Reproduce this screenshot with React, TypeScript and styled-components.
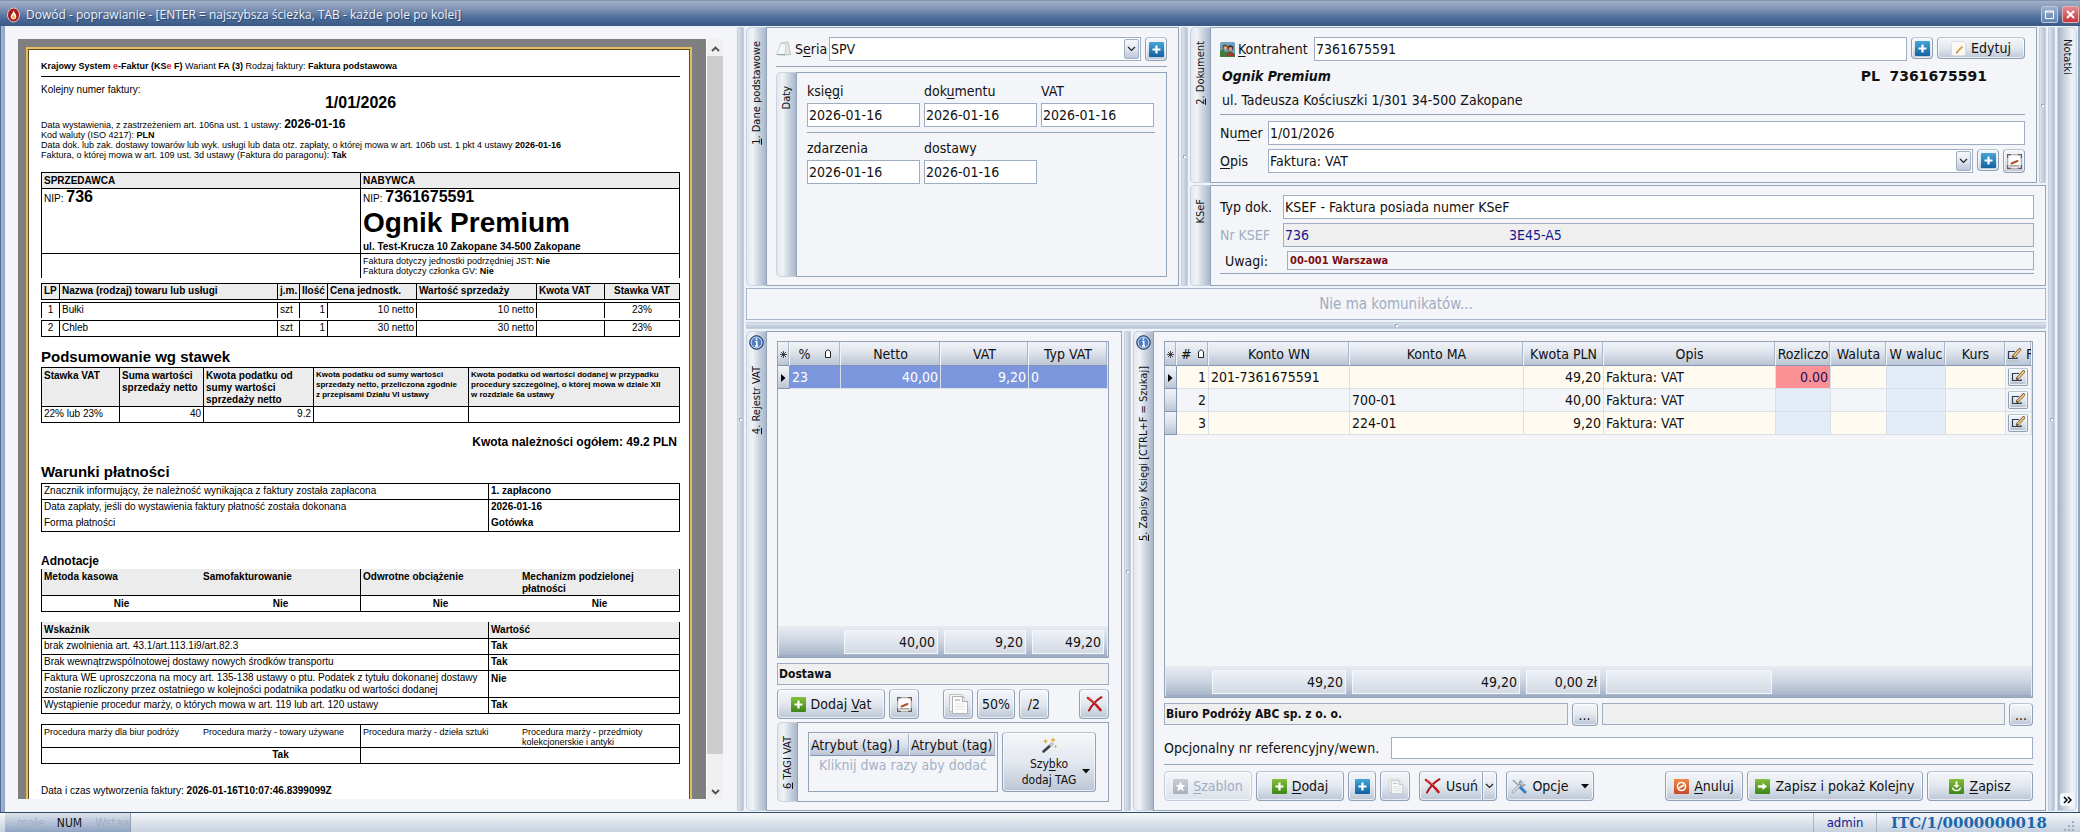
import React from "react";
import styled, { createGlobalStyle, css } from "styled-components";

const ui = `"DejaVu Sans Condensed", "DejaVu Sans", Tahoma, sans-serif`;
const doc = `"Liberation Sans", Arial, sans-serif`;
const line = "#93a3b8";
const panelBg = "#f3f5f8";
const raised = "linear-gradient(#f1f3f7, #dfe4ec 45%, #b9c4d4)";
const soft = "linear-gradient(#f4f6f9, #e3e8ef 50%, #bcc6d6)";

const Global = createGlobalStyle`
  *, *::before, *::after { box-sizing: border-box; }
  body { margin: 0; background: #eef2f9; font: 14px/18px ${ui}; color: #111; }
  button, input, select { font: inherit; color: inherit; margin: 0; }
  u { text-underline-offset: 2px; }
`;

/* ---------- window frame ---------- */

const Window = styled.div`
  display: flex;
  flex-direction: column;
  height: 100vh;
  min-height: 640px;
`;

const TitleBar = styled.header`
  flex: none;
  display: flex;
  align-items: center;
  gap: 6px;
  height: 26px;
  padding: 2px 1px 0 7px;
  border-top: 1px solid #8393ad;
  background: linear-gradient(#a3b1c8, #7c90b1 35%, #4a6a98 70%, #3a5985);
  color: #eef3fa;
`;

const Title = styled.h1`
  flex: 1;
  margin: 0;
  font: 12px/20px "Open Sans", "Noto Sans", sans-serif;
  text-shadow: 1px 1px 1px #2b4468;
`;

const CaptionButton = styled.button<{ $close?: boolean }>`
  display: grid;
  place-items: center;
  width: 17px;
  height: 17px;
  margin-left: -2px;
  padding: 0;
  border: 1px solid ${(p) => (p.$close ? "#e9b0b4" : "#b9c8de")};
  border-radius: 2px;
  background: ${(p) => (p.$close ? "linear-gradient(#e38b8f, #c5373f)" : "linear-gradient(#9db1cf, #6382ae)")};
`;

const Workspace = styled.main`
  flex: 1;
  min-height: 0;
  display: grid;
  grid-template-columns: 730fr 7px 1300fr 7px 20px;
  grid-template-rows: minmax(0, 1fr);
  column-gap: 2px;
  padding: 1px 3px 1px 5px;
  background: linear-gradient(90deg, #4d6a94 0, #4d6a94 1px, #a8b8cf 1px, #8fa3c0 5px, #eef2f9 5px, #eef2f9 calc(100% - 2px), #93a6c2 calc(100% - 2px));
`;

const Splitter = styled.div<{ $horizontal?: boolean }>`
  flex: none;
  display: grid;
  place-items: center;
  ${(p) =>
    p.$horizontal
      ? "height: 7px; background: linear-gradient(#dde3ec, #b7c2d3);"
      : "width: 7px; background: linear-gradient(90deg, #dde3ec, #b7c2d3);"}
  border: 1px solid #c5cfdd;
  border-radius: 1px;
  &::after {
    content: "";
    width: 3px;
    height: 3px;
    background: #f7f9fc;
    border: solid #9aa9bf;
    border-width: 1px 0 0 1px;
  }
`;

/* ---------- tabbed panels ---------- */

const PanelBox = styled.section<{ $grow?: boolean }>`
  display: flex;
  min-width: 0;
  min-height: 0;
  ${(p) => p.$grow && "flex: 1;"}
`;

const Tab = styled.h2<{ $info?: boolean }>`
  flex: none;
  display: flex;
  flex-direction: column;
  align-items: center;
  gap: 16px;
  width: 20px;
  margin: 0;
  padding-top: ${(p) => (p.$info ? 3 : 13)}px;
  border: 1px solid #c9d2df;
  border-right: 0;
  border-radius: 5px 0 0 5px;
  background: linear-gradient(90deg, #e3e8f0, #f0f3f7 30%, #c9d2df 65%, #a9b6ca);
  font: 11px/16px ${ui};
  span {
    writing-mode: vertical-rl;
    transform: rotate(180deg);
    white-space: nowrap;
  }
  u { text-underline-offset: -2px; }
`;

const PanelBody = styled.div<{ $pad: string }>`
  flex: 1;
  min-width: 0;
  min-height: 0;
  display: flex;
  flex-direction: column;
  padding: ${(p) => p.$pad};
  border: 1px solid ${line};
  background: ${panelBg};
`;

function Panel(props: {
  tab: React.ReactNode;
  info?: boolean;
  grow?: boolean;
  pad?: string;
  children: React.ReactNode;
}) {
  return (
    <PanelBox $grow={props.grow}>
      <Tab $info={props.info}>
        {props.info && <InfoIcon />}
        <span>{props.tab}</span>
      </Tab>
      <PanelBody $pad={props.pad ?? "9px 11px 8px 9px"}>{props.children}</PanelBody>
    </PanelBox>
  );
}

const NotesTab = styled.aside`
  display: flex;
  flex-direction: column;
  align-items: center;
  justify-content: space-between;
  padding: 11px 0 4px;
  border: 1px solid #c9d2df;
  border-radius: 0 5px 5px 0;
  background: linear-gradient(90deg, #a5b3c8, #c9d2df 35%, #f0f3f7 80%, #e3e8f0);
  font: 11px/16px ${ui};
  span { writing-mode: vertical-rl; }
`;

const MoreButton = styled.button`
  width: 14px;
  height: 13px;
  padding: 0;
  border: 0;
  border-radius: 3px;
  background: #f4f6fa;
  display: grid;
  place-items: center;
`;

const RightSide = styled.div`
  display: flex;
  flex-direction: column;
  gap: 2px;
  min-width: 0;
`;

const TopRow = styled.div`
  flex: none;
  display: grid;
  grid-template-columns: 433px 7px minmax(0, 1fr);
  column-gap: 2px;
  height: 259px;
`;

const BottomRow = styled.div`
  flex: 1;
  min-height: 0;
  display: grid;
  grid-template-columns: 376px 7px minmax(0, 1fr);
  grid-template-rows: minmax(0, 1fr);
  column-gap: 2px;
`;

const Stack = styled.div`
  display: flex;
  flex-direction: column;
  gap: 2px;
  min-width: 0;
`;

const DocumentRow = styled.div`
  flex: none;
  display: flex;
  gap: 2px;
  height: 156px;
`;

/* ---------- form parts ---------- */

const Row = styled.div<{ $top?: number; $gap?: number }>`
  flex: none;
  display: flex;
  align-items: flex-start;
  gap: ${(p) => p.$gap ?? 4}px;
  margin-top: ${(p) => p.$top ?? 0}px;
`;

const Rule = styled.hr<{ $gap: number }>`
  flex: none;
  width: 100%;
  height: 1px;
  margin: ${(p) => p.$gap}px 0 0;
  border: 0;
  background: ${line};
`;

const Label = styled.label<{ $w: number; $muted?: boolean; $indent?: number }>`
  flex: none;
  display: flex;
  align-items: center;
  gap: 3px;
  width: ${(p) => p.$w}px;
  height: 24px;
  margin-right: -4px;
  padding-left: ${(p) => p.$indent ?? 0}px;
  color: ${(p) => (p.$muted ? "#9fadc3" : "#111")};
  white-space: nowrap;
`;

const fieldBox = css`
  min-width: 0;
  border: 1px solid #9fadc2;
  border-radius: 0;
  background: #fff;
  outline: 0;
`;

const Input = styled.input`
  ${fieldBox}
  flex: 1;
  width: 100%;
  height: 24px;
  padding: 0 1px 1px;
`;

const BoldInput = styled.input`
  ${fieldBox}
  flex: 1;
  width: 100%;
  height: 22px;
  padding: 0 1px 1px;
  background: #efefef;
  font-size: 12px;
  font-weight: bold;
`;

const RemarkInput = styled(BoldInput)`
  height: 19px;
  padding-left: 2px;
  background: ${panelBg};
  color: #7d0d12;
  font-size: 11px;
`;

const Output = styled.output`
  ${fieldBox}
  flex: 1;
  display: grid;
  grid-template-columns: 224px 1fr;
  align-items: center;
  height: 24px;
  padding: 0 1px;
  background: #efefef;
  color: #17178c;
`;

const SelectWrap = styled.span`
  position: relative;
  flex: 1;
  display: flex;
`;

const Select = styled.select`
  ${fieldBox}
  appearance: none;
  flex: 1;
  height: 24px;
  padding: 0 20px 1px 1px;
`;

const Drop = styled.span`
  position: absolute;
  right: 2px;
  top: 2px;
  display: grid;
  place-items: center;
  width: 15px;
  height: 20px;
  border: 1px solid #a3b0c4;
  border-radius: 2px;
  background: ${soft};
  pointer-events: none;
`;

function ComboBox({ id, value }: { id: string; value: string }) {
  return (
    <SelectWrap>
      <Select id={id} defaultValue={value}>
        <option>{value}</option>
      </Select>
      <Drop>
        <Chevron />
      </Drop>
    </SelectWrap>
  );
}

const Button = styled.button<{ $w: number; $h?: number }>`
  flex: none;
  display: flex;
  align-items: center;
  justify-content: center;
  gap: 5px;
  width: ${(p) => p.$w}px;
  height: ${(p) => p.$h ?? 30}px;
  padding: 0;
  border: 1px solid #8fa0b9;
  border-top-color: #b9c4d3;
  border-radius: 4px;
  background: ${soft};
  box-shadow: inset 0 0 0 1px rgba(255, 255, 255, 0.65);
  white-space: nowrap;
  &:disabled {
    color: #9fadc3;
    border-color: #c3ccda;
    background: linear-gradient(#f5f7fa, #dde3ec);
  }
`;

const TagButton = styled(Button)`
  position: relative;
  flex-direction: column;
  gap: 2px;
  font-size: 12px;
  line-height: 16px;
`;

const TagArrow = styled.span`
  position: absolute;
  right: 5px;
  top: 36px;
  display: flex;
`;

const SplitPart = styled(Button)<{ $side: "left" | "right" }>`
  border-radius: ${(p) => (p.$side === "left" ? "4px 0 0 4px" : "0 4px 4px 0")};
  ${(p) => p.$side === "right" && "border-left: 0;"}
`;

const Spacer = styled.span<{ $w?: number }>`
  ${(p) => (p.$w ? `flex: none; width: ${p.$w}px;` : "flex: 1;")}
`;

const DateField = styled.label`
  flex: none;
  display: flex;
  flex-direction: column;
  gap: 3px;
  width: 113px;
`;

const DateInput = styled(Input)`
  flex: none;
`;

const PartnerLine = styled.div<{ $top: number }>`
  display: flex;
  justify-content: space-between;
  margin-top: ${(p) => p.$top}px;
  padding: 0 38px 0 2px;
  line-height: 20px;
  white-space: pre;
`;

const PartnerName = styled.strong`
  font-style: italic;
`;

const TaxNumber = styled.strong`
  font-family: "DejaVu Sans", sans-serif;
`;

const Messages = styled.div`
  flex: none;
  height: 32px;
  border: 1px solid #a9b6ca;
  background: ${panelBg};
  color: #a0adc2;
  font-size: 15px;
  line-height: 30px;
  text-align: center;
`;

/* ---------- data grids ---------- */

const GridBox = styled.div`
  flex: 1;
  min-height: 0;
  display: flex;
  flex-direction: column;
  border: 1px solid ${line};
  background: ${panelBg};
`;

const GridTable = styled.table`
  flex: none;
  width: 100%;
  table-layout: fixed;
  border-collapse: separate;
  border-spacing: 0;
`;

const Th = styled.th<{ $left?: boolean }>`
  height: 24px;
  padding: 0 1px;
  border-right: 1px solid #f1f4f8;
  border-bottom: 1px solid #8496b4;
  background: ${raised};
  box-shadow: inset -1px 0 0 #aab7c9;
  font-weight: normal;
  white-space: nowrap;
  overflow: hidden;
  text-align: ${(p) => (p.$left ? "left" : "center")};
  svg { vertical-align: middle; }
`;

const Td = styled.td<{ $right?: boolean; $bg?: string }>`
  height: 23px;
  padding: 0 2px;
  border-right: 1px solid #d8dfe9;
  border-bottom: 1px solid #d8dfe9;
  background: ${(p) => p.$bg ?? "transparent"};
  text-align: ${(p) => (p.$right ? "right" : "left")};
  white-space: nowrap;
  overflow: hidden;
`;

const Marker = styled.td`
  padding: 0;
  border-right: 1px solid #8496b4;
  border-bottom: 1px solid #8496b4;
  background: ${raised};
  text-align: center;
  svg { vertical-align: middle; }
`;

const DataRow = styled.tr<{ $tone: "selected" | "cream" | "plain" }>`
  background: ${(p) => ({ selected: "#7b96dc", cream: "#fffbf0", plain: "#f3f5f8" })[p.$tone]};
  color: ${(p) => (p.$tone === "selected" ? "#fff" : "#111")};
`;

const EditCell = styled.td`
  padding: 0 2px;
  border-right: 1px solid #d8dfe9;
  border-bottom: 1px solid #d8dfe9;
  background: ${panelBg};
`;

const RowEdit = styled(Button)`
  border-radius: 2px;
`;

const Footer = styled.div<{ $cols: string }>`
  display: grid;
  grid-template-columns: ${(p) => p.$cols};
  height: 31px;
  margin-top: auto;
  padding: 3px 0;
  border: 1px solid #e7ecf2;
  border-bottom: 2px solid #9eacc1;
  background: linear-gradient(#e6ebf2, #cdd5e1 50%, #a8b5c9);
`;

const Total = styled.div`
  margin: 0 3px;
  padding-right: 2px;
  border: 1px solid #f3f6fa;
  background: linear-gradient(#eef1f6, #d3dae5);
  line-height: 22px;
  text-align: right;
`;

const TagGrid = styled(GridBox)`
  height: 60px;
  padding: 1px;
  color: #a3b0c6;
  text-align: center;
  th { color: #111; height: 22px; }
`;

/* ---------- status bar ---------- */

const StatusBar = styled.footer`
  flex: none;
  display: flex;
  height: 20px;
  padding-left: 5px;
  border-top: 1px solid #2f4d63;
  background: linear-gradient(#f5f7fa, #c6d0de);
  line-height: 20px;
`;

const Keys = styled.div`
  display: flex;
  gap: 13px;
  width: 126px;
  padding-left: 12px;
  border-right: 1px solid #8fa0b9;
  background: linear-gradient(#dde3ec, #8fa3c2);
  font-size: 12px;
  span { color: #a3afc2; }
`;

const User = styled.div`
  width: 64px;
  margin-left: auto;
  border: solid #a9b6c9;
  border-width: 0 1px;
  color: #17178c;
  font-size: 13px;
  text-align: center;
`;

const Serial = styled.div`
  display: flex;
  justify-content: space-between;
  width: 203px;
  padding: 0 5px 0 14px;
  color: #1c66ad;
  font: bold 15px/20px "DejaVu Serif", serif;
`;

/* ---------- icons ---------- */

const InfoIcon = () => (
  <svg width="15" height="15" viewBox="0 0 15 15">
    <circle cx="7.5" cy="7.5" r="6.8" fill="#4f7fc4" stroke="#22355a" />
    <circle cx="7.5" cy="7.5" r="5.4" fill="none" stroke="#d9e5f5" />
    <path d="M7.5 3.2v1.8M6.2 6.5h1.6v4.3M6 11h3.2" stroke="#fff" strokeWidth="1.5" fill="none" />
  </svg>
);

const FlameIcon = () => (
  <svg width="13" height="16" viewBox="0 0 13 16">
    <ellipse cx="6.5" cy="8" rx="6" ry="7" fill="#a61a20" stroke="#f0c7c4" />
    <path d="M6.5 3.5C7.5 6 9.3 7 9.3 9.6a2.8 2.8 0 0 1-5.6 0C3.7 7.8 6 6.5 6.5 3.5z" fill="#fff4e0" />
    <path d="M6.5 7.5c.8 1.2 1.3 1.8 1.3 2.7a1.3 1.3 0 0 1-2.6 0c0-.9.8-1.5 1.3-2.7z" fill="#f0a13c" />
  </svg>
);

const Chevron = () => (
  <svg width="9" height="6" viewBox="0 0 9 6">
    <path d="M1 1l3.5 3.5L8 1" fill="none" stroke="#222" strokeWidth="1.2" />
  </svg>
);

const Caret = () => (
  <svg width="8" height="5" viewBox="0 0 8 5">
    <path d="M0 0h8L4 4.5z" fill="#111" />
  </svg>
);

const tones = {
  blue: ["#46a5d8", "#12629f"],
  green: ["#86bf3a", "#3b8519"],
  orange: ["#ee8a43", "#c54a2a"],
  grey: ["#c9ced6", "#aab1bc"],
};

function Tile({ tone, children }: { tone: keyof typeof tones; children: React.ReactNode }) {
  const [a, b] = tones[tone];
  return (
    <svg width="15" height="15" viewBox="0 0 15 15">
      <defs>
        <linearGradient id={`tile-${tone}`} x1="0" y1="0" x2="0" y2="1">
          <stop offset="0" stopColor={a} />
          <stop offset="1" stopColor={b} />
        </linearGradient>
      </defs>
      <rect width="15" height="15" rx="1" fill={`url(#tile-${tone})`} />
      {children}
    </svg>
  );
}

const Plus = ({ tone }: { tone: "blue" | "green" }) => (
  <Tile tone={tone}>
    <path d="M7.5 3.5v8M3.5 7.5h8" stroke="#fff" strokeWidth="2.2" />
  </Tile>
);
const Star = () => (
  <Tile tone="grey">
    <path d="M7.500 2.500l1.500 3.400 3.600.3-2.800 2.400.9 3.600-3.200-1.900-3.200 1.900.9-3.600-2.800-2.400 3.600-.3z" fill="#fff" />
  </Tile>
);
const Cancel = () => (
  <Tile tone="orange">
    <circle cx="7.5" cy="7.5" r="4" fill="none" stroke="#fff" strokeWidth="1.6" />
    <path d="M5 9l5-3" stroke="#fff" strokeWidth="1.5" />
  </Tile>
);
const Arrow = () => (
  <Tile tone="green">
    <path d="M3 6.300h4.500V4l4.500 3.500L7.500 11V8.700H3z" fill="#fff" />
  </Tile>
);
const Save = () => (
  <Tile tone="green">
    <path d="M6.500 2.500h2v3.500h2.200L7.500 9 4.300 6h2.200z" fill="#fff" />
    <path d="M3.500 8.500c.5 4 7.500 4 8 0" fill="none" stroke="#fff" strokeWidth="1.5" />
  </Tile>
);

const Cross = () => (
  <svg width="17" height="16" viewBox="0 0 17 16">
    <path d="M2 2c4 2.500 8 6.500 12.500 12" fill="none" stroke="#c3171c" strokeWidth="2.600" strokeLinecap="round" />
    <path d="M15.500 1.200C10 4.500 6 9 3 14.500" fill="none" stroke="#a8161a" strokeWidth="2" strokeLinecap="round" />
    <path d="M2.500 2c3 1.800 5 3.400 7 5.400" fill="none" stroke="#ec8a8a" strokeWidth=".8" />
  </svg>
);

const NoteIcon = () => (
  <svg width="15" height="15" viewBox="0 0 15 15">
    <rect x=".5" y=".5" width="14" height="14" rx="1.5" fill="#e9e7e5" stroke="#b3aeab" />
    <path d="M.5 4V.5H4M11 .5h3.500V4M.5 11v3.500H4M11 14.500h3.500V11" fill="none" stroke="#67615e" strokeWidth="1.400" />
    <rect x="2" y="2" width="11" height="10" rx="1" fill="#fff" />
    <path d="M4.500 9.500l6-2.500" stroke="#b2512f" strokeWidth="2" strokeLinecap="round" />
    <path d="M2.500 11.800h10" stroke="#8a8481" />
  </svg>
);

const EditNote = () => (
  <svg width="15" height="15" viewBox="0 0 15 15">
    <rect x=".5" y=".5" width="14" height="14" rx="2" fill="#fbfaf7" stroke="#ddd" />
    <path d="M6 11l5.500-5.500" stroke="#d9a545" strokeWidth="2" />
    <path d="M5 12l1.500-.5" stroke="#555" />
  </svg>
);

const CopyIcon = ({ size = 22, faded }: { size?: number; faded?: boolean }) => (
  <svg width={size} height={size} viewBox="0 0 22 22" opacity={faded ? 0.75 : 1}>
    <path d="M2.500 1.500h12l3 3v14h-15z" fill="#f4f4f4" stroke="#c0c0c0" />
    <path d="M5.500 3.500h10l5 5v12h-15z" fill="#fdfdfd" stroke="#b0b0b0" />
    <path d="M15.500 3.500v5h5" fill="#ededed" stroke="#a9a9a9" />
    <path d="M8 7h5" stroke="#999" />
    <path d="M8 11h10M8 13.500h10M8 16h10" stroke="#e2e2e2" />
  </svg>
);

const SeriesIcon = () => (
  <svg width="16" height="16" viewBox="0 0 16 16">
    <path d="M5 2l7-1 2.500 12.500L9 14z" fill="#e3e6e5" stroke="#bcc6c2" />
    <path d="M5 2L.7 13.500 9 14.500l1-11z" fill="#f6f8f7" stroke="#c6d0cc" />
    <path d="M1 13.500h8" stroke="#86ab9f" />
  </svg>
);

const PeopleIcon = () => (
  <svg width="15" height="15" viewBox="0 0 15 15">
    <rect width="15" height="15" rx="1.500" fill="#6ea3c6" />
    <path d="M0 15V9l3-2 2 3 5-1 5 3v3z" fill="#3f7a3a" />
    <circle cx="5" cy="5" r="2.600" fill="#7a4425" />
    <circle cx="5.300" cy="6" r="1.700" fill="#e0b18a" />
    <circle cx="10.500" cy="6" r="2.800" fill="#4b2a1c" />
    <circle cx="10.500" cy="7" r="1.900" fill="#d79d78" />
    <path d="M6.500 14c.3-5 8-5 8 0z" fill="#9e3a33" />
  </svg>
);

const ToolsIcon = () => (
  <svg width="16" height="16" viewBox="0 0 16 16">
    <path d="M2 2l9 9" stroke="#9aa3ad" strokeWidth="1.600" />
    <path d="M9.500 9.500l4.500 4.500" stroke="#2f7fc9" strokeWidth="3" strokeLinecap="round" />
    <path d="M2 14L11 5" stroke="#8d97a3" strokeWidth="2.600" strokeLinecap="round" />
    <path d="M2 14L11 5" stroke="#e6e9ed" strokeWidth="1.200" strokeLinecap="round" />
    <path d="M10.500 2.500a2.800 2.800 0 1 0 3.500 3.500" fill="none" stroke="#8d97a3" strokeWidth="1.600" />
  </svg>
);

const WandIcon = () => (
  <svg width="17" height="17" viewBox="0 0 17 17">
    <path d="M2.500 14.500L11 7" stroke="#3a3f47" strokeWidth="2.600" strokeLinecap="round" />
    <path d="M9.500 8.300L11.500 6.500" stroke="#c9cdd3" strokeWidth="2.400" strokeLinecap="round" />
    <path d="M4.500 1.500l.8 2 2 .8-2 .8-.8 2-.8-2-2-.8 2-.8zM12 0l.8 2.200L15 3l-2.200.8L12 6l-.8-2.200L9 3l2.200-.8zM14.500 7.500l.6 1.500 1.400.5-1.400.6-.6 1.400-.5-1.400-1.500-.6 1.500-.5z" fill="#efa62b" />
  </svg>
);

const PencilIcon = () => (
  <svg width="15" height="14" viewBox="0 0 15 14">
    <path d="M8 3.500H1.500v7H10V9" fill="none" stroke="#2e3c50" strokeWidth="1.200" />
    <path d="M6.500 8.500L12.500 1.800" stroke="#6b5233" strokeWidth="3.200" strokeLinecap="round" />
    <path d="M7.300 7.600L12.500 1.800" stroke="#ecc07a" strokeWidth="2" strokeLinecap="round" />
    <path d="M0 13h12" stroke="#b2b8c2" />
  </svg>
);

const AsteriskIcon = () => (
  <svg width="7" height="7" viewBox="0 0 7 7">
    <path d="M3.500 0v7M0 3.500h7M1 1l5 5M6 1L1 6" stroke="#222" strokeWidth=".8" />
  </svg>
);

const SortIcon = () => (
  <svg width="6" height="9" viewBox="0 0 6 9">
    <path d="M.5 8.500v-6L3 .700l2.500 1.800v6z" fill="#fff" stroke="#222" />
  </svg>
);

const RowArrow = () => (
  <svg width="5" height="8" viewBox="0 0 5 8">
    <path d="M0 0l4.500 4L0 8z" fill="#000" />
  </svg>
);

/* ---------- invoice preview ---------- */

const Viewer = styled.section`
  display: flex;
  min-width: 0;
  min-height: 0;
  padding: 12px 12px 12px 13px;
  background: ${panelBg};
`;

const Desk = styled.div`
  flex: 1;
  min-width: 0;
  overflow: hidden;
  padding: 8px 14px 0 8px;
  background: #7f7f7f;
`;

const Paper = styled.article`
  min-height: 900px;
  padding: 11px 10px 40px 13px;
  border: 2px solid #e2bd62;
  outline: 1px solid #5e4b22;
  outline-offset: -3px;
  background: #fff;
  color: #000;
  font: 9px/10px ${doc};
`;

const ScrollBar = styled.div`
  flex: none;
  display: flex;
  flex-direction: column;
  align-items: center;
  justify-content: space-between;
  width: 17px;
  padding: 7px 0 4px;
  border-left: 1px solid #fff;
  background: #f0f0f0;
`;

const Thumb = styled.div`
  flex: 1;
  width: 16px;
  margin: 4px 0 35px;
  background: #cdcdcd;
`;

const P = styled.p<{ $top?: number; $lh?: number; $size?: number; $align?: string }>`
  margin: ${(p) => p.$top ?? 0}px 0 0;
  font-size: ${(p) => p.$size ?? 9}px;
  line-height: ${(p) => p.$lh ?? 10}px;
  text-align: ${(p) => p.$align ?? "left"};
  white-space: nowrap;
`;

const DateLine = styled(P)`
  height: 12px;
`;

const GrandTotal = styled(P)`
  padding-right: 3px;
`;

const Big = styled.strong<{ $size: number }>`
  font-size: ${(p) => p.$size}px;
`;

const Red = styled.span`
  color: #d0201e;
`;

const InkRule = styled.hr`
  height: 1px;
  margin: 4px 0 0;
  border: 0;
  background: #000;
`;

const Heading = styled.h3<{ $top: number; $bottom: number; $size?: number }>`
  margin: ${(p) => p.$top}px 0 ${(p) => p.$bottom}px;
  font-size: ${(p) => p.$size ?? 15}px;
  line-height: ${(p) => (p.$size ? 14 : 18)}px;
`;

const Sheet = styled.table<{ $top?: number }>`
  width: 100%;
  margin-top: ${(p) => p.$top ?? 0}px;
  table-layout: fixed;
  border-collapse: collapse;
  font-size: 10px;
  line-height: 12px;
`;

const C = styled.td<{
  $open?: string;
  $align?: string;
  $vtop?: boolean;
  $flush?: boolean;
  $small?: boolean;
  $head?: boolean;
  $h?: number;
}>`
  height: ${(p) => p.$h ?? 16}px;
  padding: ${(p) => (p.$vtop ? "2px" : "0")} 2px 0;
  border: 1px solid #000;
  ${(p) => p.$open?.split(" ").map((side) => `border-${side}: 0;`).join(" ")}
  background: ${(p) => (p.$head ? "#ececec" : "transparent")};
  text-align: ${(p) => p.$align ?? "left"};
  vertical-align: ${(p) => (p.$vtop || p.$flush ? "top" : "middle")};
  white-space: nowrap;
  ${(p) => p.$small && "font-size: 9px; line-height: 10px;"}
`;

const SmallNote = styled(C)`
  font-size: 8px;
  line-height: 10px;
`;

const Gap = styled.td<{ $h: number }>`
  height: ${(p) => p.$h}px;
  padding: 0;
`;

const Cols = ({ widths }: { widths: (number | string)[] }) => (
  <colgroup>
    {widths.map((w, i) => (
      <col key={i} style={{ width: w }} />
    ))}
  </colgroup>
);

const items = [
  ["1", "Bułki", "szt", "1", "10 netto", "10 netto", "", "23%"],
  ["2", "Chleb", "szt", "1", "30 netto", "30 netto", "", "23%"],
];
const itemAlign = ["center", "left", "left", "right", "right", "right", "left", "center"];

function Invoice() {
  return (
    <Paper>
      <P $lh={12}>
        <b>Krajowy System <Red>e</Red>-Faktur (KS<Red>e</Red> F)</b> Wariant <b>FA (3)</b> Rodzaj faktury: <b>Faktura podstawowa</b>
      </P>
      <InkRule />
      <P $top={8} $size={10}>Kolejny numer faktury:</P>
      <P $size={16} $lh={16} $align="center"><b>1/01/2026</b></P>
      <DateLine $top={7} $lh={12}>
        Data wystawienia, z zastrzeżeniem art. 106na ust. 1 ustawy: <Big $size={12}>2026-01-16</Big>
      </DateLine>
      <P>Kod waluty (ISO 4217): <b>PLN</b></P>
      <P>
        Data dok. lub zak. dostawy towarów lub wyk. usługi lub data otz. zapłaty, o której mowa w art. 106b ust. 1 pkt 4 ustawy <b>2026-01-16</b>
      </P>
      <P>Faktura, o której mowa w art. 109 ust. 3d ustawy (Faktura do paragonu): <b>Tak</b></P>

      <Sheet $top={12}>
        <tbody>
          <tr>
            <C as="th" $head>SPRZEDAWCA</C>
            <C as="th" $head>NABYWCA</C>
          </tr>
          <tr>
            <C $flush $h={65}>
              <P $lh={16} $size={10}>NIP: <Big $size={16}>736</Big></P>
            </C>
            <C $flush $h={65}>
              <P $lh={16} $size={10}>NIP: <Big $size={16}>7361675591</Big></P>
              <P $top={2} $lh={28} $size={28}><b>Ognik Premium</b></P>
              <P $top={4} $lh={12} $size={10}><b>ul. Test-Krucza 10 Zakopane 34-500 Zakopane</b></P>
            </C>
          </tr>
          <tr>
            <C $open="bottom" $h={24} />
            <C $open="bottom" $h={24} $vtop $small>
              Faktura dotyczy jednostki podrzędniej JST: <b>Nie</b>
              <br />
              Faktura dotyczy członka GV: <b>Nie</b>
            </C>
          </tr>
        </tbody>
      </Sheet>

      <Sheet $top={5}>
        <Cols widths={[18, "auto", 22, 28, 89, 120, 68, 75]} />
        <thead>
          <tr>
            {["LP", "Nazwa (rodzaj) towaru lub usługi", "j.m.", "Ilość", "Cena jednostk.", "Wartość sprzedaży", "Kwota VAT", "Stawka VAT"].map((h, i) => (
              <C as="th" key={h} $head $align={i === 7 ? "center" : "left"}>{h}</C>
            ))}
          </tr>
        </thead>
        <tbody>
          {items.map((row, r) => (
            <React.Fragment key={r}>
              <tr>
                <Gap colSpan={8} $h={r ? 2 : 3} />
              </tr>
              <tr>
                {row.map((v, i) => (
                  <C key={i} $align={itemAlign[i]} $open={r ? "" : "bottom"}>{v}</C>
                ))}
              </tr>
            </React.Fragment>
          ))}
        </tbody>
      </Sheet>

      <Heading $top={11} $bottom={1}>Podsumowanie wg stawek</Heading>
      <Sheet>
        <Cols widths={[78, 84, 110, 155, "auto"]} />
        <thead>
          <tr>
            <C as="th" $head $vtop $h={39}>Stawka VAT</C>
            <C as="th" $head $vtop>Suma wartości<br />sprzedaży netto</C>
            <C as="th" $head $vtop>Kwota podatku od<br />sumy wartości<br />sprzedaży netto</C>
            <SmallNote as="th" $head $vtop>
              Kwota podatku od sumy wartości<br />sprzedaży netto, przeliczona zgodnie<br />z przepisami Działu VI ustawy
            </SmallNote>
            <SmallNote as="th" $head $vtop>
              Kwota podatku od wartości dodanej w przypadku<br />procedury szczególnej, o której mowa w dziale XII<br />w rozdziale 6a ustawy
            </SmallNote>
          </tr>
        </thead>
        <tbody>
          <tr>
            <C>22% lub 23%</C>
            <C $align="right">40</C>
            <C $align="right">9.2</C>
            <C />
            <C />
          </tr>
        </tbody>
      </Sheet>
      <GrandTotal $top={12} $lh={14} $size={12} $align="right"><b>Kwota należności ogółem: 49.2 PLN</b></GrandTotal>

      <Heading $top={14} $bottom={2}>Warunki płatności</Heading>
      <Sheet>
        <Cols widths={["auto", 191]} />
        <tbody>
          <tr>
            <C>Znacznik informujący, że należność wynikająca z faktury została zapłacona</C>
            <C><b>1. zapłacono</b></C>
          </tr>
          <tr>
            <C $open="bottom">Data zapłaty, jeśli do wystawienia faktury płatność została dokonana</C>
            <C $open="bottom"><b>2026-01-16</b></C>
          </tr>
          <tr>
            <C $open="top">Forma płatności</C>
            <C $open="top"><b>Gotówka</b></C>
          </tr>
        </tbody>
      </Sheet>

      <Heading $top={22} $bottom={1} $size={12}>Adnotacje</Heading>
      <Sheet>
        <thead>
          <tr>
            <C as="th" $head $vtop $h={27} $open="top right">Metoda kasowa</C>
            <C as="th" $head $vtop $open="top left">Samofakturowanie</C>
            <C as="th" $head $vtop $open="top right">Odwrotne obciążenie</C>
            <C as="th" $head $vtop $open="top left">Mechanizm podzielonej<br />płatności</C>
          </tr>
        </thead>
        <tbody>
          <tr>
            <C $align="center" $open="right"><b>Nie</b></C>
            <C $align="center" $open="left"><b>Nie</b></C>
            <C $align="center" $open="right"><b>Nie</b></C>
            <C $align="center" $open="left"><b>Nie</b></C>
          </tr>
        </tbody>
      </Sheet>

      <Sheet $top={10}>
        <Cols widths={["auto", 191]} />
        <thead>
          <tr>
            <C as="th" $head $open="top">Wskaźnik</C>
            <C as="th" $head $open="top">Wartość</C>
          </tr>
        </thead>
        <tbody>
          <tr>
            <C>brak zwolnienia art. 43.1/art.113.1i9/art.82.3</C>
            <C><b>Tak</b></C>
          </tr>
          <tr>
            <C>Brak wewnątrzwspólnotowej dostawy nowych środków transportu</C>
            <C><b>Tak</b></C>
          </tr>
          <tr>
            <C $h={27}>
              Faktura WE uproszczona na mocy art. 135-138 ustawy o ptu. Podatek z tytułu dokonanej dostawy
              <br />
              zostanie rozliczony przez ostatniego w kolejności podatnika podatku od wartości dodanej
            </C>
            <C $vtop><b>Nie</b></C>
          </tr>
          <tr>
            <C>Wystąpienie procedur marży, o których mowa w art. 119 lub art. 120 ustawy</C>
            <C><b>Tak</b></C>
          </tr>
        </tbody>
      </Sheet>

      <Sheet $top={10}>
        <tbody>
          <tr>
            <C $small $vtop $h={22} $open="right">Procedura marży dla biur podróży</C>
            <C $small $vtop $open="left">Procedura marży - towary używane</C>
            <C $small $vtop $open="right">Procedura marży - dzieła sztuki</C>
            <C $small $vtop $open="left">Procedura marży - przedmioty<br />kolekcjonerskie i antyki</C>
          </tr>
          <tr>
            <C $open="right" />
            <C $align="center" $open="left"><b>Tak</b></C>
            <C $open="right" />
            <C $open="left" />
          </tr>
        </tbody>
      </Sheet>
      <P $top={21} $lh={12} $size={10}>Data i czas wytworzenia faktury: <b>2026-01-16T10:07:46.8399099Z</b></P>
    </Paper>
  );
}

/* ---------- form panels ---------- */

function DateBox({ id, label }: { id: string; label: React.ReactNode }) {
  return (
    <DateField htmlFor={id}>
      <span>{label}</span>
      <DateInput id={id} defaultValue="2026-01-16" />
    </DateField>
  );
}

const DatesWrap = styled.div`
  flex: 1;
  min-height: 0;
  display: flex;
  margin-top: 5px;
`;

function BasicPanel() {
  return (
    <Panel tab={<><u>1</u>. Dane podstawowe</>}>
      <Row>
        <Label htmlFor="seria" $w={53}><SeriesIcon /><span>S<u>e</u>ria</span></Label>
        <ComboBox id="seria" value="SPV" />
        <Button $w={22} $h={24} aria-label="Dodaj serię"><Plus tone="blue" /></Button>
      </Row>
      <Rule $gap={5} />
      <DatesWrap>
        <Panel grow tab="Daty" pad="9px 11px 8px 10px">
          <Row>
            <DateBox id="d-ksiegi" label={<>księ<u>g</u>i</>} />
            <DateBox id="d-dokumentu" label={<>dok<u>u</u>mentu</>} />
            <DateBox id="d-vat" label="VAT" />
          </Row>
          <Rule $gap={5} />
          <Row $top={6}>
            <DateBox id="d-zdarzenia" label="zdarzenia" />
            <DateBox id="d-dostawy" label="dostawy" />
          </Row>
        </Panel>
      </DatesWrap>
    </Panel>
  );
}

function DocumentPanel() {
  return (
    <Panel grow tab={<><u>2</u>. Dokument</>}>
      <Row>
        <Label htmlFor="kontrahent" $w={94}><PeopleIcon /><span><u>K</u>ontrahent</span></Label>
        <Input id="kontrahent" defaultValue="7361675591" />
        <Button $w={22} $h={22} aria-label="Dodaj kontrahenta"><Plus tone="blue" /></Button>
        <Button $w={88} $h={22}><EditNote />Edytuj</Button>
      </Row>
      <PartnerLine $top={5}>
        <PartnerName>Ognik Premium</PartnerName>
        <TaxNumber>PL  7361675591</TaxNumber>
      </PartnerLine>
      <PartnerLine $top={4}>ul. Tadeusza Kościuszki 1/301 34-500 Zakopane</PartnerLine>
      <Rule $gap={4} />
      <Row $top={6}>
        <Label htmlFor="numer" $w={48}><span>Nu<u>m</u>er</span></Label>
        <Input id="numer" defaultValue="1/01/2026" />
      </Row>
      <Row $top={4}>
        <Label htmlFor="opis" $w={48}><span><u>O</u>pis</span></Label>
        <ComboBox id="opis" value="Faktura: VAT" />
        <Button $w={22} $h={22} aria-label="Dodaj opis"><Plus tone="blue" /></Button>
        <Button $w={22} $h={24} aria-label="Edytuj opis"><NoteIcon /></Button>
      </Row>
    </Panel>
  );
}

const RemarkRow = styled(Row)`
  label { height: 19px; }
`;

function KsefPanel() {
  return (
    <Panel grow tab="KSeF">
      <Row>
        <Label htmlFor="typ" $w={63}>Typ dok.</Label>
        <Input id="typ" defaultValue="KSEF - Faktura posiada numer KSeF" />
      </Row>
      <Row $top={4}>
        <Label htmlFor="nr-ksef" $w={63} $muted>Nr KSEF</Label>
        <Output id="nr-ksef"><span>736</span><span>3E45-A5</span></Output>
      </Row>
      <RemarkRow $top={4}>
        <Label htmlFor="uwagi" $w={67} $indent={5}>Uwagi:</Label>
        <RemarkInput id="uwagi" defaultValue="00-001 Warszawa" />
      </RemarkRow>
      <Rule $gap={3} />
    </Panel>
  );
}

const TagsRow = styled.div`
  flex: none;
  display: flex;
  height: 80px;
  margin-top: 3px;
`;

const HeadPair = styled.span`
  display: flex;
  align-items: center;
  justify-content: space-around;
`;

function VatPanel() {
  return (
    <Panel info tab={<><u>4</u>. Rejestr VAT</>} pad="9px 12px 8px 10px">
      <GridBox>
        <GridTable>
          <Cols widths={[12, 51, "auto", 88, 79]} />
          <thead>
            <tr>
              <Th><AsteriskIcon /></Th>
              <Th><HeadPair><span>%</span><SortIcon /></HeadPair></Th>
              <Th>Netto</Th>
              <Th>VAT</Th>
              <Th>Typ VAT</Th>
            </tr>
          </thead>
          <tbody>
            <DataRow $tone="selected">
              <Marker><RowArrow /></Marker>
              <Td>23</Td>
              <Td $right>40,00</Td>
              <Td $right>9,20</Td>
              <Td>0</Td>
            </DataRow>
          </tbody>
        </GridTable>
        <Footer $cols="62px 1fr 88px 78px">
          <span />
          <Total>40,00</Total>
          <Total>9,20</Total>
          <Total>49,20</Total>
        </Footer>
      </GridBox>
      <Row $top={5}>
        <BoldInput aria-label="Opis pozycji" defaultValue="Dostawa" />
      </Row>
      <Row $top={4}>
        <Button $w={108}><Plus tone="green" /><span>Dodaj <u>V</u>at</span></Button>
        <Button $w={30} aria-label="Edytuj"><NoteIcon /></Button>
        <Spacer $w={16} />
        <Button $w={30} aria-label="Kopiuj"><CopyIcon /></Button>
        <Button $w={38}>50%</Button>
        <Button $w={30}>/2</Button>
        <Spacer />
        <Button $w={30} aria-label="Usuń"><Cross /></Button>
      </Row>
      <TagsRow>
        <Panel grow tab={<><u>6</u> TAGI VAT</>} pad="9px 12px 8px 10px">
          <Row>
            <TagGrid>
              <GridTable>
                <Cols widths={[100, "auto"]} />
                <thead>
                  <tr>
                    <Th $left>Atrybut (tag) J</Th>
                    <Th $left>Atrybut (tag)</Th>
                  </tr>
                </thead>
              </GridTable>
              <span>Kliknij dwa razy aby dodać</span>
            </TagGrid>
            <TagButton $w={94} $h={60}>
              <WandIcon />
              <span>Szy<u>b</u>ko<br />dodaj TAG</span>
              <TagArrow><Caret /></TagArrow>
            </TagButton>
          </Row>
        </Panel>
      </TagsRow>
    </Panel>
  );
}

const pale = "#e2edf8";
const entries = [
  { n: 1, wn: "201-7361675591", ma: "", amount: "49,20" },
  { n: 2, wn: "", ma: "700-01", amount: "40,00" },
  { n: 3, wn: "", ma: "224-01", amount: "9,20" },
];

const Settled = styled(Td)`
  color: #2b0f55;
`;

const RefRow = styled(Row)`
  input, label { height: 22px; }
`;

function LedgerPanel() {
  return (
    <Panel info tab={<><u>5</u>. Zapisy Księgi [CTRL+F = Szukaj]</>} pad="9px 12px 9px 10px">
      <GridBox>
        <GridTable>
          <Cols widths={[12, 32, "auto", 174, 80, 172, 55, 56, 59, 60, 26]} />
          <thead>
            <tr>
              <Th><AsteriskIcon /></Th>
              <Th><HeadPair><span>#</span><SortIcon /></HeadPair></Th>
              {["Konto WN", "Konto MA", "Kwota PLN", "Opis", "Rozliczo", "Waluta", "W waluc", "Kurs"].map((h) => (
                <Th key={h}>{h}</Th>
              ))}
              <Th $left><PencilIcon /> F</Th>
            </tr>
          </thead>
          <tbody>
            {entries.map((e, i) => (
              <DataRow key={e.n} $tone={i % 2 ? "plain" : "cream"}>
                <Marker>{i === 0 && <RowArrow />}</Marker>
                <Td $right>{e.n}</Td>
                <Td>{e.wn}</Td>
                <Td>{e.ma}</Td>
                <Td $right>{e.amount}</Td>
                <Td>Faktura: VAT</Td>
                <Settled $right $bg={i === 0 ? "#fb9194" : pale}>{i === 0 ? "0.00" : ""}</Settled>
                <Td />
                <Td $bg={pale} />
                <Td />
                <EditCell>
                  <RowEdit $w={20} $h={18} aria-label="Edytuj zapis"><PencilIcon /></RowEdit>
                </EditCell>
              </DataRow>
            ))}
          </tbody>
        </GridTable>
        <Footer $cols="43px 1fr 174px 80px 172px 256px">
          <span />
          <Total>49,20</Total>
          <Total>49,20</Total>
          <Total>0,00 zł</Total>
          <Total />
        </Footer>
      </GridBox>
      <Row $top={5}>
        <BoldInput aria-label="Konto WN" defaultValue="Biuro Podróży ABC sp. z o. o." />
        <Button $w={26} $h={23}>...</Button>
        <BoldInput aria-label="Konto MA" />
        <Button $w={24} $h={23}>...</Button>
      </Row>
      <RefRow $top={11}>
        <Label htmlFor="ref" $w={227}>Opcjonalny nr referencyjny/wewn.</Label>
        <Input id="ref" />
      </RefRow>
      <Rule $gap={5} />
      <Row $top={6}>
        <Button $w={88} disabled><Star /><span><u>S</u>zablon</span></Button>
        <Button $w={88}><Plus tone="green" /><span><u>D</u>odaj</span></Button>
        <Button $w={28} aria-label="Dodaj kolejny"><Plus tone="blue" /></Button>
        <Button $w={30} aria-label="Kopiuj"><CopyIcon size={17} faded /></Button>
        <Spacer $w={1} />
        <Row $gap={0}>
          <SplitPart $w={64} $side="left"><Cross />Usuń</SplitPart>
          <SplitPart $w={14} $side="right" aria-label="Więcej"><Chevron /></SplitPart>
        </Row>
        <Spacer $w={1} />
        <Button $w={88}><ToolsIcon />Opcje<Spacer $w={2} /><Caret /></Button>
        <Spacer />
        <Button $w={78}><Cancel /><span><u>A</u>nuluj</span></Button>
        <Button $w={176}><Arrow />Zapisz i pokaż Kolejny</Button>
        <Button $w={106}><Save /><span><u>Z</u>apisz</span></Button>
      </Row>
    </Panel>
  );
}

export default function App() {
  return (
    <Window>
      <Global />
      <TitleBar>
        <FlameIcon />
        <Title>Dowód - poprawianie - [ENTER = najszybsza ścieżka, TAB - każde pole po kolei]</Title>
        <CaptionButton aria-label="Maksymalizuj">
          <svg width="9" height="9" viewBox="0 0 9 9"><path d="M.5 1h8v7.500h-8zM.5 2h8" fill="none" stroke="#fff" /></svg>
        </CaptionButton>
        <CaptionButton $close aria-label="Zamknij">
          <svg width="9" height="9" viewBox="0 0 9 9"><path d="M1 1l7 7M8 1L1 8" stroke="#fff" strokeWidth="2" /></svg>
        </CaptionButton>
      </TitleBar>
      <Workspace>
        <Viewer>
          <Desk><Invoice /></Desk>
          <ScrollBar>
            <svg width="9" height="6" viewBox="0 0 9 6"><path d="M1 5l3.500-3.500L8 5" fill="none" stroke="#505050" strokeWidth="1.800" /></svg>
            <Thumb />
            <svg width="9" height="6" viewBox="0 0 9 6"><path d="M1 1l3.500 3.500L8 1" fill="none" stroke="#505050" strokeWidth="1.800" /></svg>
          </ScrollBar>
        </Viewer>
        <Splitter />
        <RightSide>
          <TopRow>
            <BasicPanel />
            <Splitter />
            <Stack>
              <DocumentRow>
                <DocumentPanel />
                <Splitter />
              </DocumentRow>
              <KsefPanel />
            </Stack>
          </TopRow>
          <Messages>Nie ma komunikatów...</Messages>
          <Splitter $horizontal />
          <BottomRow>
            <VatPanel />
            <Splitter />
            <LedgerPanel />
          </BottomRow>
        </RightSide>
        <Splitter />
        <NotesTab>
          <span>Notatki</span>
          <MoreButton aria-label="Rozwiń">
            <svg width="9" height="8" viewBox="0 0 9 8"><path d="M1 1l3 3-3 3M5 1l3 3-3 3" fill="none" stroke="#000" strokeWidth="1.500" /></svg>
          </MoreButton>
        </NotesTab>
      </Workspace>
      <StatusBar>
        <Keys><span>małe</span>NUM<span>Wstaw</span></Keys>
        <User>admin</User>
        <Serial>
          ITC/1/0000000018
          <svg width="12" height="18" viewBox="0 0 12 18">
            <path d="M9 8h2v2H9zM5 12h2v2H5zM9 12h2v2H9zM1 16h2v2H1zM5 16h2v2H5zM9 16h2v2H9z" fill="#9fadc2" />
          </svg>
        </Serial>
      </StatusBar>
    </Window>
  );
}
